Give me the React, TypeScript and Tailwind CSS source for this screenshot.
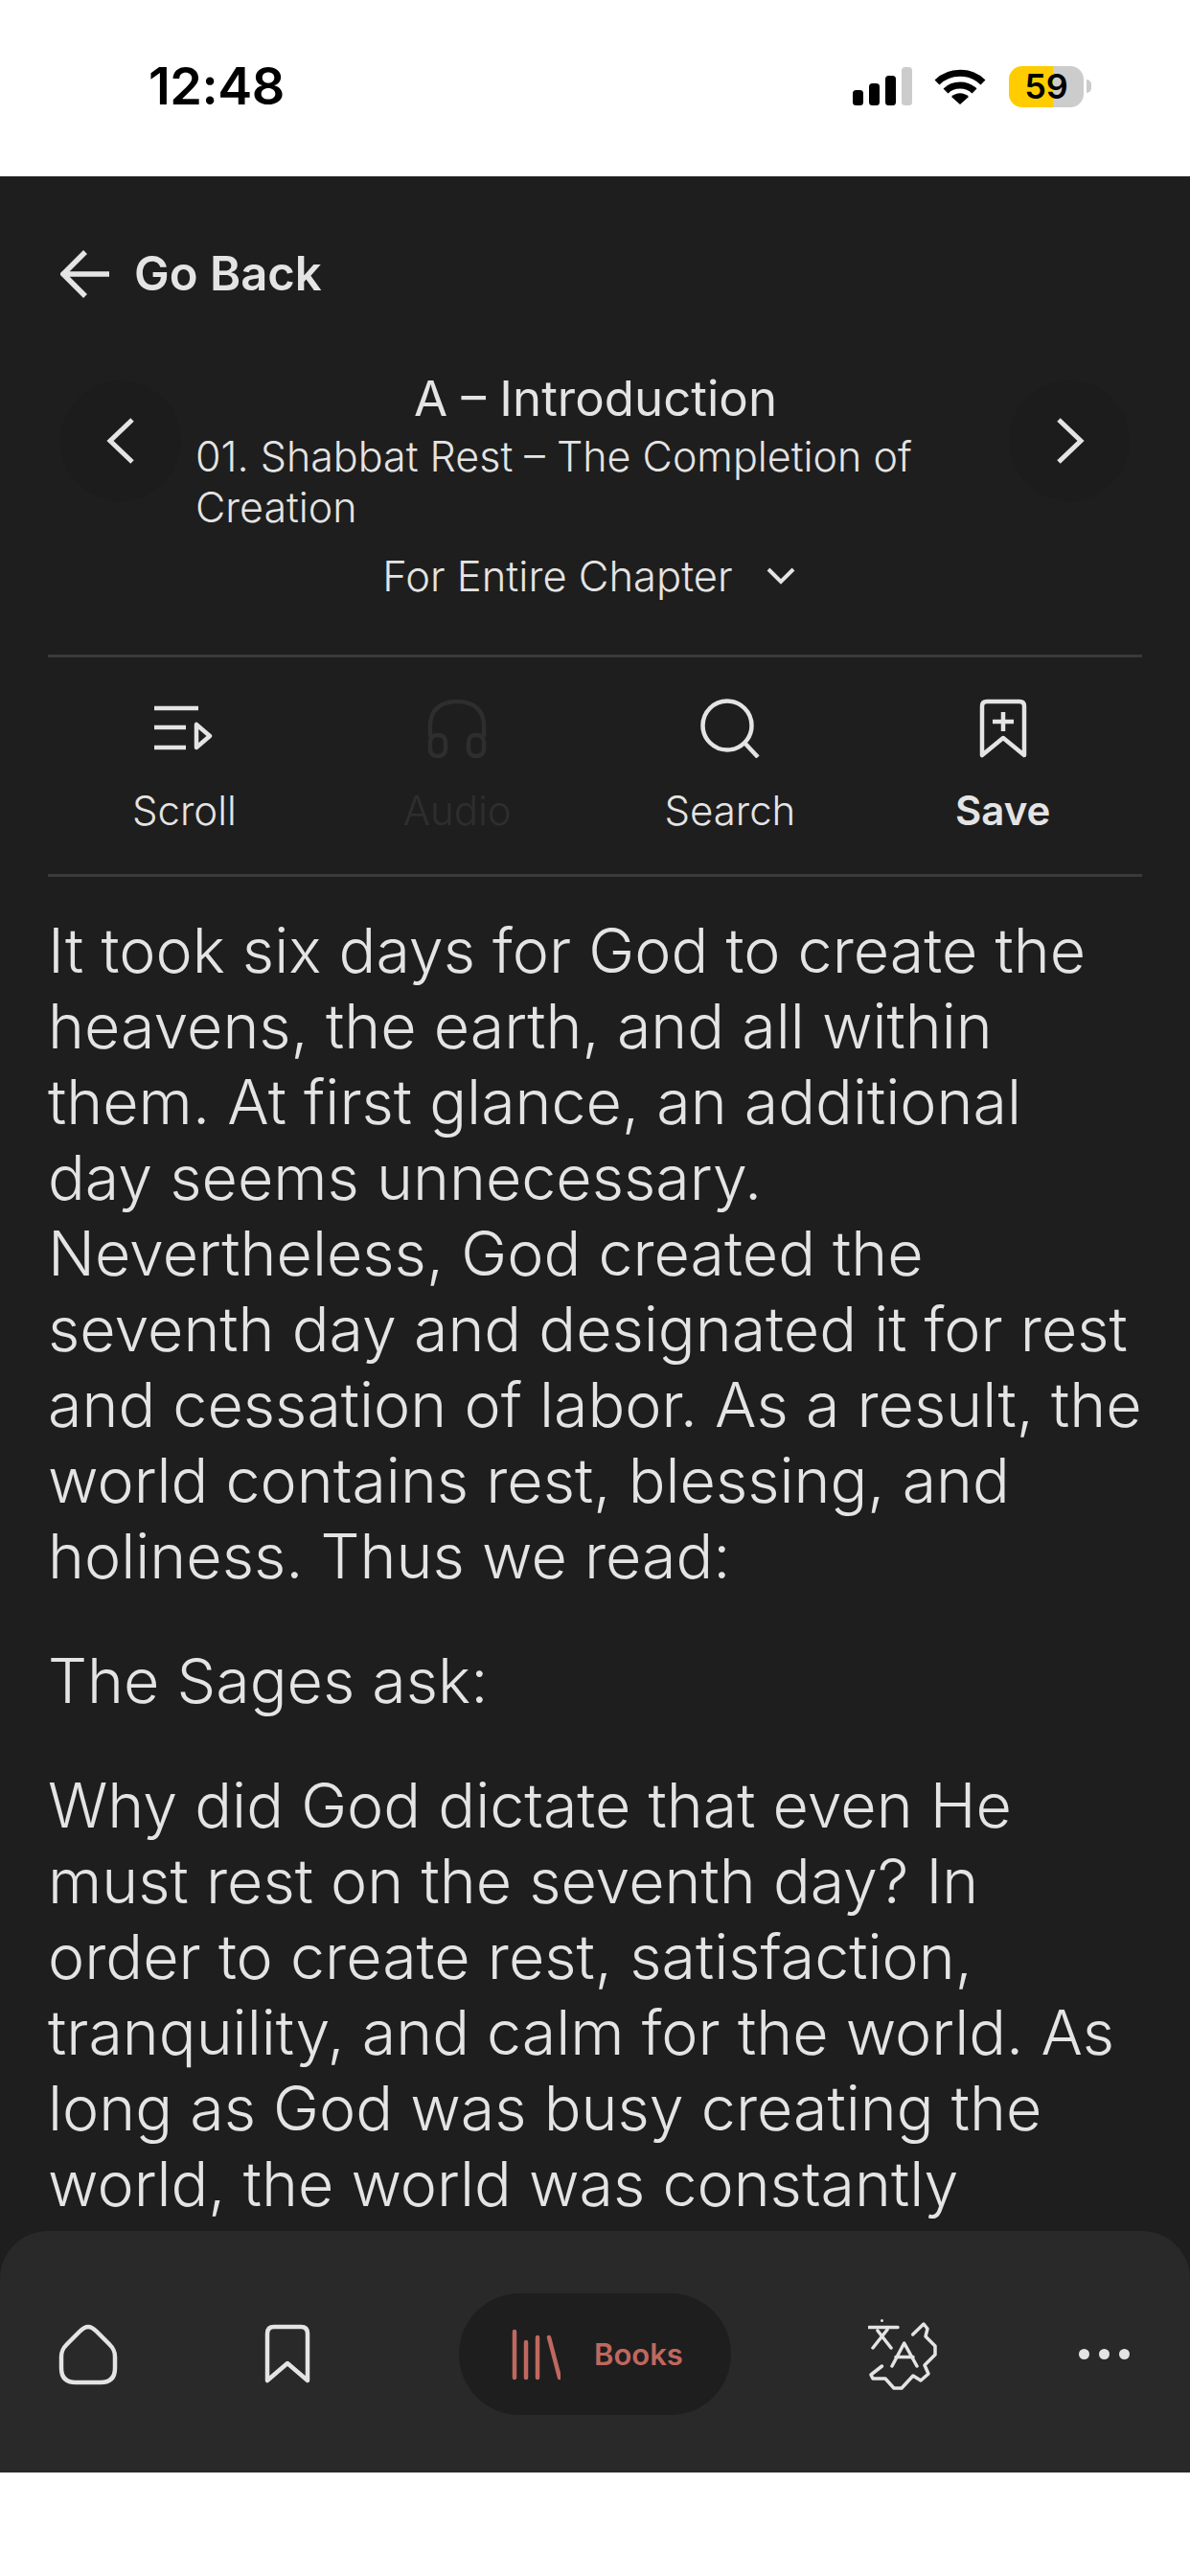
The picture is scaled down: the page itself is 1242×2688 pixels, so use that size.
const paragraphs = [
  "It took six days for God to create the heavens, the earth, and all within them. At first glance, an additional\nday seems unnecessary. Nevertheless, God created the seventh day and designated it for rest and cessation of labor. As a result, the world contains rest, blessing, and holiness. Thus we read:",
  "The Sages ask:",
  "Why did God dictate that even He must rest on the seventh day? In\norder to create rest, satisfaction, tranquility, and calm for the world. As long as God was busy creating the world, the world was constantly",
];

function StatusBar() {
  return (
    <div className="flex h-[184px] shrink-0 items-center bg-white pb-[4px] pl-[155px] pr-[103px] text-black">
      <span className="text-[54px] font-semibold leading-none tracking-[-0.5px]">12:48</span>
      <div className="ml-auto flex items-center">
        <svg width="62" height="40" viewBox="0 0 62 40">
          <rect x="0" y="24" width="11" height="16" rx="3.5" fill="#000" />
          <rect x="17" y="17" width="11" height="23" rx="3.5" fill="#000" />
          <rect x="34" y="9" width="11" height="31" rx="3.5" fill="#000" />
          <rect x="51" y="0" width="11" height="40" rx="3.5" fill="#cccccc" />
        </svg>
        <svg className="ml-[23px]" width="54" height="40" viewBox="0 0 54 40" fill="none" stroke="#000" strokeWidth="7">
          <path d="M3 16C16 3 38 3 51 16" />
          <path d="M12 25C20 17 34 17 42 25" />
          <path d="M18 31L27 39L36 31C31 26 23 26 18 31Z" fill="#000" stroke="none" />
        </svg>
        <div className="ml-[24px] flex h-[43px] w-[78px] items-center justify-center rounded-[14px] bg-[linear-gradient(90deg,#ffcc00_59%,#cccccc_59%)] text-[36px] font-semibold leading-none">
          59
        </div>
        <div className="ml-[3px] h-[14px] w-[5px] rounded-r-full bg-[#cccccc]" />
      </div>
    </div>
  );
}

function ToolItem({ icon, label, className }: { icon: React.ReactNode; label: string; className: string }) {
  return (
    <div className={`flex flex-col items-center ${className}`}>
      <div className="flex h-[62px] items-center justify-center">{icon}</div>
      <span className="mt-[28px] text-[42px] leading-[54px]">{label}</span>
    </div>
  );
}

function NavBar() {
  return (
    <div className="absolute inset-x-0 bottom-0 flex h-[252px] items-start rounded-t-[50px] bg-[#292929] pl-[61px] pt-[65px]">
      <svg className="mt-[32px]" width="62" height="64" viewBox="0 0 62 64" fill="none" stroke="#e4e4e4" strokeWidth="4.5" strokeLinejoin="round">
        <path d="M31 3C28 3 26 4 22 8L9 21C4 26 3 29 3 34V46C3 56 8 61 18 61H44C54 61 59 56 59 46V34C59 29 58 26 53 21L40 8C36 4 34 3 31 3Z" />
      </svg>
      <svg className="ml-[153px] mt-[32px]" width="48" height="62" viewBox="0 0 48 62" fill="none" stroke="#e4e4e4" strokeWidth="4.5" strokeLinejoin="round">
        <path d="M3 59V10C3 5 6 3 10 3H38C42 3 45 5 45 10V59L24 41Z" />
      </svg>
      <div className="ml-[155px] flex h-[127px] w-[284px] items-center rounded-full bg-[#1e1e1e] pl-[54px]">
        <svg width="52" height="54" viewBox="0 0 52 54" fill="none" stroke="#c0685f" strokeWidth="4.5" strokeLinecap="round">
          <path d="M4 3V51M16 14V51M28 9V51M40 9L51 51" />
        </svg>
        <span className="ml-[35px] text-[31px] font-semibold leading-none text-[#c0685f]">Books</span>
      </div>
      <svg className="ml-[143px] mt-[27px]" width="72" height="74" viewBox="0 0 72 74" fill="none" stroke="#e4e4e4" strokeWidth="3.5" strokeLinecap="round" strokeLinejoin="round">
        <circle cx="14.5" cy="1.5" r="1.5" fill="#e4e4e4" stroke="none" />
        <path d="M1 8.5H31M5 30L20 11M10 12L24 30M25 49L37.7 25L51 49M29 39.5H47" />
        <path d="M46.7 16L58 5L62 10L60 18L70 28V37L59 48L63 57L55 64L47 59L35 72H27L18 62H5L3 58L14.5 49" />
      </svg>
      <div className="ml-[148px] mt-[58px] flex items-center gap-[10px]">
        <div className="size-[11px] rounded-full bg-[#e4e4e4]" />
        <div className="size-[11px] rounded-full bg-[#e4e4e4]" />
        <div className="size-[11px] rounded-full bg-[#e4e4e4]" />
      </div>
    </div>
  );
}

export default function App() {
  return (
    <div className="flex h-[2688px] w-[1242px] flex-col overflow-hidden bg-white font-['Inter',sans-serif]">
      <StatusBar />
      <div className="relative h-[2396px] shrink-0 overflow-hidden bg-[#1e1e1e] text-[#e4e4e4]">
        <div className="flex items-center pl-[63px] pt-[75px]">
          <svg width="52" height="50" viewBox="0 0 52 50" fill="none" stroke="#e4e4e4" strokeWidth="5.5" strokeLinejoin="miter">
            <path d="M51 25H4M26 2L3 25L26 48" />
          </svg>
          <span className="ml-[25px] text-[49px] font-semibold leading-[54px] [font-variation-settings:'opsz'_32]">Go Back</span>
        </div>

        <div className="mt-[74px] flex items-start px-[63px] [font-variation-settings:'opsz'_32]">
          <div className="mt-[10px] flex size-[126px] shrink-0 items-center justify-center rounded-full bg-[#1c1c1c]">
            <svg width="30" height="48" viewBox="0 0 30 48" fill="none" stroke="#e4e4e4" strokeWidth="5">
              <path d="M27 2L4 24L27 46" />
            </svg>
          </div>
          <div className="flex-1 pl-[15px]">
            <div className="pr-[14px] text-center text-[51px] font-normal leading-[58px]">A – Introduction</div>
            <div className="mt-[5px] pr-[70px] text-[43px] font-light leading-[53px]">01. Shabbat Rest – The Completion of Creation</div>
            <div className="mt-[18px] flex items-center justify-center pr-[28px] text-[43.5px] font-light leading-[54px]">
              For Entire Chapter
              <svg className="ml-[35px]" width="30" height="18" viewBox="0 0 30 18" fill="none" stroke="#e4e4e4" strokeWidth="4">
                <path d="M2 2L15 15L28 2" />
              </svg>
            </div>
          </div>
          <div className="mt-[10px] flex size-[126px] shrink-0 items-center justify-center rounded-full bg-[#1c1c1c] pl-[2px]">
            <svg width="30" height="48" viewBox="0 0 30 48" fill="none" stroke="#e4e4e4" strokeWidth="5">
              <path d="M3 2L26 24L3 46" />
            </svg>
          </div>
        </div>

        <div className="mx-[50px] mt-[55px] border-y-[3px] border-[#3a3a3a] [font-variation-settings:'opsz'_32]">
          <div className="grid h-[226px] grid-cols-4 pr-[3px] pt-[43px]">
            <ToolItem
              label="Scroll"
              className="font-light"
              icon={
                <svg width="62" height="48" viewBox="0 0 62 48" fill="none" stroke="#e4e4e4" strokeWidth="4.5">
                  <path d="M0 3H46M0 23H33M0 44H33" />
                  <path d="M44 20V44L58 32Z" strokeLinejoin="round" />
                </svg>
              }
            />
            <ToolItem
              label="Audio"
              className="font-light text-[#2e2e2e]"
              icon={
                <svg width="62" height="62" viewBox="0 0 62 62" fill="none" stroke="#2e2e2e" strokeWidth="4.5">
                  <path d="M3 40V28C3 12 14 3 31 3C48 3 59 12 59 28V40" />
                  <rect x="3" y="38" width="16" height="22" rx="7" />
                  <rect x="43" y="38" width="16" height="22" rx="7" />
                </svg>
              }
            />
            <ToolItem
              label="Search"
              className="font-light"
              icon={
                <svg width="62" height="62" viewBox="0 0 62 62" fill="none" stroke="#e4e4e4" strokeWidth="4.5">
                  <circle cx="28" cy="28" r="25.5" />
                  <path d="M46 46L60 61" />
                </svg>
              }
            />
            <ToolItem
              label="Save"
              className="font-semibold"
              icon={
                <svg width="50" height="62" viewBox="0 0 50 62" fill="none" stroke="#e4e4e4" strokeWidth="4.5" strokeLinejoin="round">
                  <path d="M3 59V8C3 4 5 3 8 3H42C45 3 47 4 47 8V59L25 41Z" />
                  <path d="M25 14V34M14 24H36" />
                </svg>
              }
            />
          </div>
        </div>

        <div className="flex flex-col gap-[51px] pl-[50px] pr-[42px] pt-[38px] text-[64.5px] font-light leading-[79px] [font-variation-settings:'opsz'_32]">
          {paragraphs.map((p, i) => (
            <p key={i} className="whitespace-pre-line">
              {p}
            </p>
          ))}
        </div>

        <NavBar />
      </div>
      <div className="flex-1 bg-white" />
    </div>
  );
}
